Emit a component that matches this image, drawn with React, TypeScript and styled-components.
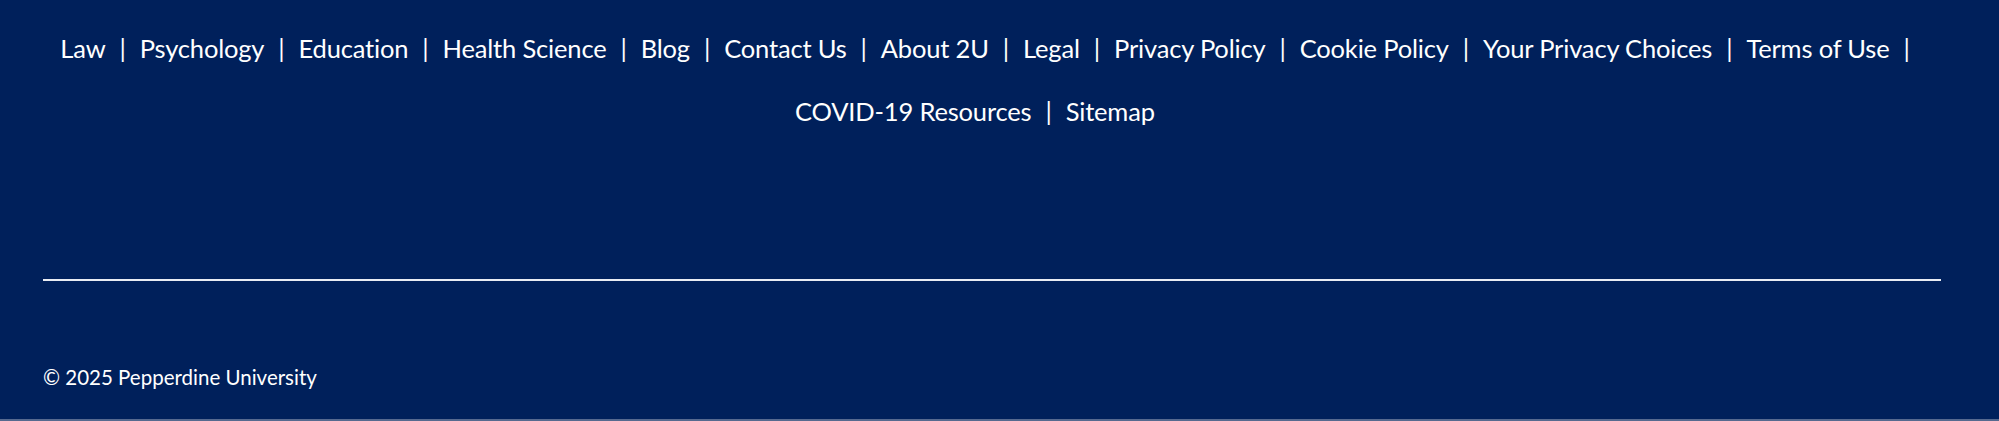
import React from "react";
import styled, { createGlobalStyle } from "styled-components";

const GlobalStyle = createGlobalStyle`
  html, body {
    margin: 0;
    padding: 0;
    background: #00205b;
  }
  * { box-sizing: border-box; }
`;

const Footer = styled.footer`
  background: #00205b;
  color: #ffffff;
  font-family: Lato, "Open Sans", sans-serif;
  padding: 17px 58px 30px 43px;
  border-bottom: 2px solid #56698f;
  height: 421px;
`;

const NavList = styled.ul`
  list-style: none;
  margin: 0;
  padding: 0;
  display: flex;
  flex-wrap: wrap;
  justify-content: center;
`;

const NavItem = styled.li`
  display: flex;
  align-items: center;
  font-size: 25.5px;
  letter-spacing: -0.17px;
  line-height: 63px;
`;

const NavLink = styled.a`
  color: #ffffff;
  text-decoration: none;
  white-space: nowrap;
`;

const Separator = styled.span<{ $hidden?: boolean }>`
  margin: 0 14px;
  visibility: ${(p) => (p.$hidden ? "hidden" : "visible")};
`;

const Rule = styled.hr`
  margin: 136px 0 0;
  border: none;
  height: 2px;
  background: #e9ecf3;
`;

const Copyright = styled.p`
  margin: 84px 0 0;
  font-size: 20.5px;
  line-height: 24px;
  color: #ffffff;
`;

const links = [
  "Law",
  "Psychology",
  "Education",
  "Health Science",
  "Blog",
  "Contact Us",
  "About 2U",
  "Legal",
  "Privacy Policy",
  "Cookie Policy",
  "Your Privacy Choices",
  "Terms of Use",
  "COVID-19 Resources",
  "Sitemap",
];

export default function App() {
  return (
    <>
      <GlobalStyle />
      <Footer>
        <NavList>
          {links.map((label, i) => (
            <NavItem key={label}>
              <NavLink href="#">{label}</NavLink>
              <Separator $hidden={i === links.length - 1}>|</Separator>
            </NavItem>
          ))}
        </NavList>
        <Rule />
        <Copyright>© 2025 Pepperdine University</Copyright>
      </Footer>
    </>
  );
}
